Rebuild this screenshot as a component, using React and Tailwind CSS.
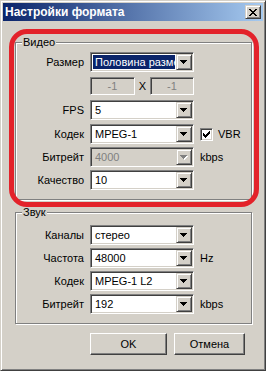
import React from "react";

const ARROW_ROWS = [[0, 7], [1, 5], [2, 3], [3, 1]];

function Arrow({ disabled }) {
  return (
    <div className="w-[16px] h-[16px] shrink-0 bg-[#d4d0c8] border border-t-[#d4d0c8] border-l-[#d4d0c8] border-b-[#404040] border-r-[#404040] shadow-[inset_1px_1px_0_#fff,inset_-1px_-1px_0_#808080] flex items-center justify-center">
      <svg width="8" height="5" viewBox="0 0 8 5" shapeRendering="crispEdges">
        {disabled &&
          ARROW_ROWS.map(([y, w]) => (
            <rect key={"s" + y} x={(7 - w) / 2 + 1} y={y + 1} width={w} height={1} fill="#fff" />
          ))}
        {ARROW_ROWS.map(([y, w]) => (
          <rect key={y} x={(7 - w) / 2} y={y} width={w} height={1} fill={disabled ? "#808080" : "#000"} />
        ))}
      </svg>
    </div>
  );
}

function Combo({ value, disabled, highlight }) {
  return (
    <div
      className={`flex h-[20px] w-[104px] shrink-0 border border-t-[#808080] border-l-[#808080] border-b-white border-r-white shadow-[inset_1px_1px_0_#404040,inset_-1px_-1px_0_#d4d0c8] p-[1px] ${
        disabled ? "bg-[#d4d0c8]" : "bg-white"
      }`}
    >
      <div className="flex-1 min-w-0 overflow-hidden p-[1px] flex">
        <div
          className={`flex-1 min-w-0 flex items-center pl-[2px] whitespace-nowrap overflow-hidden ${
            highlight ? "bg-[#0a246a] text-white" : disabled ? "text-[#808080]" : "text-black"
          }`}
        >
          {value}
        </div>
      </div>
      <Arrow disabled={disabled} />
    </div>
  );
}

function Edit({ value, w }) {
  return (
    <div
      className={`${w} h-[18px] shrink-0 border border-t-[#808080] border-l-[#808080] border-b-white border-r-white shadow-[inset_1px_1px_0_#404040,inset_-1px_-1px_0_#d4d0c8] bg-[#d4d0c8] text-[#808080] flex items-center justify-center`}
    >
      {value}
    </div>
  );
}

const CHECK_COLS = [2, 3, 4, 3, 2, 1, 0];

function Checkbox() {
  return (
    <div className="w-[13px] h-[13px] shrink-0 border border-t-[#808080] border-l-[#808080] border-b-white border-r-white shadow-[inset_1px_1px_0_#404040,inset_-1px_-1px_0_#d4d0c8] bg-white flex items-center justify-center">
      <svg width="7" height="7" viewBox="0 0 7 7" shapeRendering="crispEdges">
        {CHECK_COLS.map((t, x) => (
          <rect key={x} x={x} y={t} width={1} height={3} fill="#000" />
        ))}
      </svg>
    </div>
  );
}

function Row({ label, children, className = "" }) {
  return (
    <div className={`flex items-center h-[20px] ${className}`}>
      <div className="w-[68px] text-right shrink-0 mr-[6px]">{label}</div>
      {children}
    </div>
  );
}

function Group({ title, className = "", children }) {
  return (
    <div
      className={`relative ml-[12px] w-[237px] border border-[#808080] shadow-[inset_1px_1px_0_#fff,1px_1px_0_#fff] ${className}`}
    >
      <div className="absolute left-[6px] top-[-8px] px-[1px] bg-[#d4d0c8] leading-[14px]">{title}</div>
      {children}
    </div>
  );
}

const CLOSE_ROWS = ["11000011", "01100110", "00111100", "00011000", "00111100", "01100110", "11000011"];

function CloseButton() {
  return (
    <div className="w-[16px] h-[14px] bg-[#d4d0c8] border border-t-[#d4d0c8] border-l-[#d4d0c8] border-b-[#404040] border-r-[#404040] shadow-[inset_1px_1px_0_#fff,inset_-1px_-1px_0_#808080] flex items-center justify-center">
      <svg width="8" height="7" viewBox="0 0 8 7" shapeRendering="crispEdges">
        {CLOSE_ROWS.map((r, y) =>
          r.split("").map((c, x) =>
            c === "1" ? <rect key={y + "-" + x} x={x} y={y} width={1} height={1} fill="#000" /> : null
          )
        )}
      </svg>
    </div>
  );
}

function WinButton({ children, w }) {
  return (
    <div
      className={`${w} h-[22px] bg-[#d4d0c8] border border-t-white border-l-white border-b-[#404040] border-r-[#404040] shadow-[inset_-1px_-1px_0_#808080,inset_1px_1px_0_#d4d0c8] flex items-center justify-center`}
    >
      {children}
    </div>
  );
}

export default function App() {
  return (
    <div className="relative w-[266px] h-[371px] bg-[#d4d0c8] border border-t-[#d4d0c8] border-l-[#d4d0c8] border-b-[#404040] border-r-[#404040] shadow-[inset_1px_1px_0_#fff,inset_-1px_-1px_0_#808080] p-[2px] flex flex-col font-['Liberation_Sans',Arial,sans-serif] text-[11px] text-black leading-none overflow-hidden">
      {/* Title bar */}
      <div className="h-[18px] shrink-0 flex items-center justify-between pl-[2px] pr-[2px] bg-[linear-gradient(to_right,#0a246a,#a6caf0)]">
        <span className="text-white font-bold text-[12px]">Настройки формата</span>
        <CloseButton />
      </div>

      {/* Video group */}
      <Group title="Видео" className="mt-[21px] pt-[9px] pb-[9px]">
        <Row label="Размер">
          <Combo value="Половина размера" highlight />
        </Row>
        <div className="flex items-center h-[18px] mt-[5px] pl-[74px]">
          <Edit value="-1" w="w-[45px]" />
          <div className="w-[15px] text-center">X</div>
          <Edit value="-1" w="w-[44px]" />
        </div>
        <Row label="FPS" className="mt-[5px]">
          <Combo value="5" />
        </Row>
        <Row label="Кодек" className="mt-[4px]">
          <Combo value="MPEG-1" />
          <div className="ml-[6px]">
            <Checkbox />
          </div>
          <span className="ml-[5px]">VBR</span>
        </Row>
        <Row label="Битрейт" className="mt-[3px]">
          <Combo value="4000" disabled />
          <span className="ml-[6px]">kbps</span>
        </Row>
        <Row label="Качество" className="mt-[3px]">
          <Combo value="10" />
        </Row>
      </Group>

      {/* Sound group */}
      <Group title="Звук" className="mt-[12px] pt-[12px] pb-[9px]">
        <Row label="Каналы">
          <Combo value="стерео" />
        </Row>
        <Row label="Частота" className="mt-[3px]">
          <Combo value="48000" />
          <span className="ml-[6px]">Hz</span>
        </Row>
        <Row label="Кодек" className="mt-[3px]">
          <Combo value="MPEG-1 L2" />
        </Row>
        <Row label="Битрейт" className="mt-[3px]">
          <Combo value="192" />
          <span className="ml-[6px]">kbps</span>
        </Row>
      </Group>

      {/* Buttons */}
      <div className="flex mt-[9px] ml-[87px] gap-[7px]">
        <WinButton w="w-[77px]">OK</WinButton>
        <WinButton w="w-[71px]">Отмена</WinButton>
      </div>

      {/* Red annotation */}
      <div className="absolute left-[8px] top-[28px] w-[250px] h-[178px] border-[5px] border-[#e3222a] rounded-[18px] pointer-events-none" />
    </div>
  );
}
